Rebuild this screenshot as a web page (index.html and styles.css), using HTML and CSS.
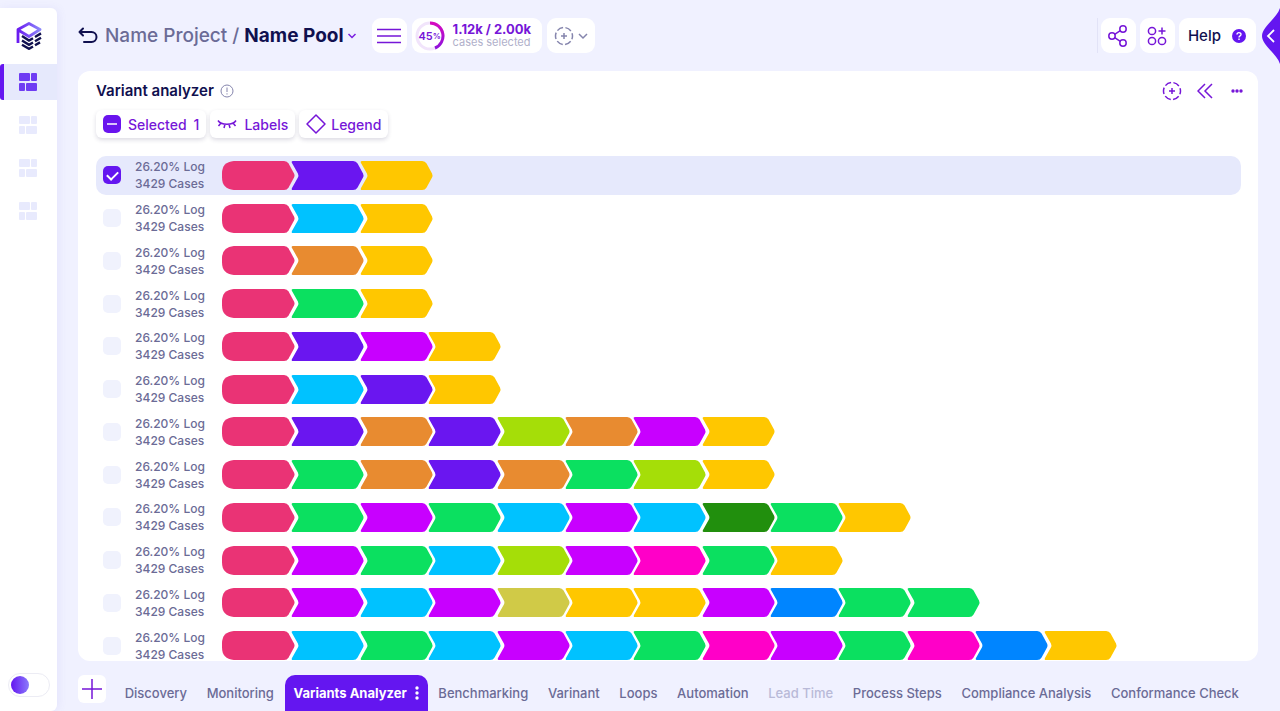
FILE: index.html
```
<!DOCTYPE html>
<html lang="en">
<head>
    <meta charset="UTF-8">
    <meta name="viewport" content="width=device-width, initial-scale=1.0">
    <title>Variant analyzer</title>
    <link rel="stylesheet" href="styles.css">
</head>
<body>
    <svg class="defs" aria-hidden="true">
        <defs>
            <linearGradient id="violet" x1="0" y1="0" x2="1" y2="0">
                <stop offset="0" stop-color="#6a1bf0"/>
                <stop offset="1" stop-color="#8b86fb"/>
            </linearGradient>
            <linearGradient id="ringColor" x1="0" y1="0" x2="0" y2="1">
                <stop offset="0" stop-color="#d60ac0"/>
                <stop offset="1" stop-color="#8f12dc"/>
            </linearGradient>
            <symbol id="dashboard" viewBox="0 0 18 18">
                <rect x="0" y="0" width="11" height="8" rx="1"/>
                <rect x="12" y="0" width="6" height="8" rx="1"/>
                <rect x="0" y="10" width="6" height="8" rx="1"/>
                <rect x="7" y="10" width="11" height="8" rx="1"/>
            </symbol>
            <symbol id="target" viewBox="0 0 20 20">
                <circle cx="10" cy="10" r="8.5" stroke-dasharray="6.5 2.4" stroke-dashoffset="3.25"/>
                <path d="M10 7v6M7 10h6"/>
            </symbol>
        </defs>
    </svg>

    <aside class="sidebar">
        <a class="logo" href="#" aria-label="Home">
            <svg width="26" height="28" viewBox="0 0 26 28" fill="none">
                <path d="M2 21V7.500L13 1.500 24 7.500 13 14.500 3 8.500" stroke="url(#violet)" stroke-width="2.800" stroke-linejoin="round"/>
                <path d="M6 14l7 4.500 4-2.300M19 15l6-3.600M6 18.500l7 4.300 4-2.300M19 19.300l6-3.600M6 22.800l7 4 4-2.300M19 23.300l5-2.900" stroke="#10104f" stroke-width="2.400"/>
            </svg>
        </a>
        <nav class="side-nav">
            <a class="side-link active" href="#" aria-label="Dashboard 1"><svg width="18" height="18"><use href="#dashboard"/></svg></a>
            <a class="side-link" href="#" aria-label="Dashboard 2"><svg width="18" height="18"><use href="#dashboard"/></svg></a>
            <a class="side-link" href="#" aria-label="Dashboard 3"><svg width="18" height="18"><use href="#dashboard"/></svg></a>
            <a class="side-link" href="#" aria-label="Dashboard 4"><svg width="18" height="18"><use href="#dashboard"/></svg></a>
        </nav>
        <input type="checkbox" class="switch" aria-label="Dark theme">
    </aside>

    <div class="page">
        <header class="topbar">
            <button class="icon-button back" aria-label="Back">
                <svg width="20" height="18" viewBox="0 0 20 18" fill="none" stroke="#10104f" stroke-width="2" stroke-linecap="round" stroke-linejoin="round"><path d="M5 1.500L1.500 5l3.500 3.500M1.500 5h12a4.500 4.500 0 0 1 0 10H6"/></svg>
            </button>
            <div class="crumbs">
                <a href="#">Name Project</a><span>/</span>
                <button class="pool">Name Pool<svg width="10" height="8" viewBox="0 0 10 8" fill="none" stroke="#7a1fe0" stroke-width="1.500"><path d="M1.500 2L5 5.500 8.500 2"/></svg></button>
            </div>
            <button class="tile" aria-label="Menu">
                <svg width="24" height="16" viewBox="0 0 24 16" stroke="#7616d8" stroke-width="1.500"><path d="M0 1.500h24M0 8h24M0 14.500h24"/></svg>
            </button>
            <div class="tile cases">
                <div class="ring">
                    <svg width="30" height="30" viewBox="0 0 30 30" fill="none" stroke-width="3">
                        <circle cx="15" cy="15" r="13" stroke="#f1e4fb"/>
                        <path d="M15 2a13 13 0 0 1 5 25" stroke="url(#ringColor)"/>
                    </svg>
                    <span class="percent">45<small>%</small></span>
                </div>
                <div class="cases-text">
                    <strong>1.12k / 2.00k</strong>
                    <span>cases selected</span>
                </div>
            </div>
            <button class="tile add-filter" aria-label="Add filter">
                <svg width="20" height="20" fill="none" stroke="#8585ad" stroke-width="1.500"><use href="#target"/></svg>
                <svg width="10" height="8" viewBox="0 0 10 8" fill="none" stroke="#8585ad" stroke-width="1.500"><path d="M1 2l4 4 4-4"/></svg>
            </button>

            <div class="actions">
                <button class="tile" aria-label="Share">
                    <svg width="20" height="22" viewBox="0 0 20 22" fill="none" stroke="#7616d8" stroke-width="1.500"><circle cx="4" cy="11" r="3.200"/><circle cx="15" cy="4" r="3.200"/><circle cx="15" cy="18" r="3.200"/><path d="M6.700 9.300l5.600-3.600M6.700 12.700l5.600 3.600"/></svg>
                </button>
                <button class="tile" aria-label="Add widget">
                    <svg width="20" height="20" viewBox="0 0 20 20" fill="none" stroke="#7616d8" stroke-width="1.500"><circle cx="5" cy="5" r="3.600"/><circle cx="5" cy="15" r="3.600"/><circle cx="15" cy="15" r="3.600"/><path d="M15 1.500v7M11.500 5h7"/></svg>
                </button>
                <button class="tile help">Help
                    <svg width="14" height="14" viewBox="0 0 14 14" fill="none" stroke="#fff" stroke-width="1.400"><circle cx="7" cy="7" r="7" fill="#6416f0" stroke="none"/><path d="M5 5.600C5 3 9 3 9 5.500 9 7 7 6.800 7 8.400M7 9.600V11"/></svg>
                </button>
            </div>
        </header>

        <main class="card">
            <div class="card-head">
                <h1>Variant analyzer</h1>
                <svg width="14" height="14" viewBox="0 0 14 14" fill="none" stroke="#8585ad"><circle cx="7" cy="7" r="6"/><path d="M7 3.500v4.500M7 9.300v1.200"/></svg>
                <div class="card-tools">
                    <button class="icon-button" aria-label="Select"><svg width="20" height="20" fill="none" stroke="#7616d8" stroke-width="1.500"><use href="#target"/></svg></button>
                    <button class="icon-button" aria-label="Collapse"><svg width="16" height="16" viewBox="0 0 16 16" fill="none" stroke="#7616d8" stroke-width="1.500"><path d="M8 1L1 8l7 7M15 1L8 8l7 7"/></svg></button>
                    <button class="icon-button" aria-label="More"><svg width="14" height="4" viewBox="0 0 14 4" fill="#7616d8"><circle cx="3" cy="2" r="1.700"/><circle cx="7" cy="2" r="1.700"/><circle cx="11" cy="2" r="1.700"/></svg></button>
                </div>
            </div>

            <div class="filters">
                <button class="filter">
                    <svg width="18" height="18" viewBox="0 0 18 18"><rect width="18" height="18" rx="5" fill="#6a14ee"/><path d="M4 9h10" stroke="#fff" stroke-width="1.500"/></svg>
                    Selected<span>1</span>
                </button>
                <button class="filter">
                    <svg width="20" height="10" viewBox="0 0 20 10" fill="none" stroke="#7616d8" stroke-width="1.500"><path d="M1 1.500c3 5 15 5 18 0M4 4L1.500 7M8 5.200L7 9M12 5.200L13 9M16 4l2.500 3"/></svg>
                    Labels
                </button>
                <button class="filter legend">
                    <svg width="20" height="20" viewBox="0 0 20 20" fill="none" stroke="#7616d8" stroke-width="1.500"><path d="M10 1l9 9-9 9-9-9z" stroke-linejoin="round"/></svg>
                    Legend
                </button>
            </div>

            <div class="variants" id="variants"></div>
        </main>

        <nav class="tabs">
            <button class="tile add-tab" aria-label="Add tab">
                <svg width="20" height="20" viewBox="0 0 20 20" stroke="#7616d8" stroke-width="1.500"><path d="M10 0v20M0 10h20"/></svg>
            </button>
            <a href="#">Discovery</a>
            <a href="#">Monitoring</a>
            <a href="#" class="current">Variants Analyzer
                <svg width="4" height="14" viewBox="0 0 4 14" fill="#fff"><circle cx="2" cy="2" r="1.700"/><circle cx="2" cy="7" r="1.700"/><circle cx="2" cy="12" r="1.700"/></svg>
            </a>
            <a href="#">Benchmarking</a>
            <a href="#">Varinant</a>
            <a href="#">Loops</a>
            <a href="#">Automation</a>
            <a href="#" class="muted">Lead Time</a>
            <a href="#">Process Steps</a>
            <a href="#">Compliance Analysis</a>
            <a href="#">Conformance Check</a>
        </nav>
    </div>

    <button class="drawer" aria-label="Open panel">
        <svg width="18" height="56" viewBox="0 0 18 56" fill="none"><path d="M18 0C15 10 0 19 0 28s15 18 18 28z" fill="#6416f0"/><path d="M12 22l-6 6 6 6" stroke="#fff" stroke-width="1.800"/></svg>
    </button>

    <script>
        const variants = [
            "rose violet yellow",
            "rose sky yellow",
            "rose orange yellow",
            "rose green yellow",
            "rose violet purple yellow",
            "rose sky violet yellow",
            "rose violet orange violet lime orange purple yellow",
            "rose green orange violet orange green lime yellow",
            "rose green purple green sky purple sky forest green yellow",
            "rose purple green sky lime purple pink green yellow",
            "rose purple sky purple olive yellow yellow purple blue green green",
            "rose sky green sky purple sky green pink purple green pink blue yellow"
        ];

        // the first step is rounded on the left, the others have a notch
        const first = "M12 0H63Q66 0 67.500 2.500L73 12Q74 14 73 16L67.500 25.500Q66 28 63 28H12Q0 27 0 16V12Q0 1 12 0Z";
        const step = "M2 0H63Q66 0 67.500 2.500L73 12Q74 14 73 16L67.500 25.500Q66 28 63 28H2Q0 28 1 26L7 16Q8 14 7 12L1 2Q0 0 2 0Z";

        document.getElementById("variants").innerHTML = variants.map((colors, row) => {
            const steps = colors.split(" ").map((color, i) =>
                `<svg class="step ${color}" width="73" height="29" viewBox="0 0 74 28" preserveAspectRatio="none"><path d="${i ? step : first}"/></svg>`
            ).join("");
            return `<label class="variant">
                <input type="checkbox" ${row === 0 ? "checked" : ""}>
                <span class="variant-text">26.20% Log<br>3429 Cases</span>
                <span class="steps">${steps}</span>
            </label>`;
        }).join("");
    </script>
</body>
</html>
```
FILE: styles.css
```
* {
    box-sizing: border-box;
}
body {
    margin: 0;
    height: 100vh;
    display: flex;
    overflow: hidden;
    background-color: #f0f1ff;
    font-family: Inter, "Open Sans", sans-serif;
    font-size: 13px;
    font-weight: 500;
    color: #6b6b96;
}
button {
    font: inherit;
    color: inherit;
    background: none;
    border: none;
    padding: 0;
    cursor: pointer;
}
a {
    color: inherit;
    text-decoration: none;
}
svg {
    display: block;
    flex-shrink: 0;
}
.defs {
    position: absolute;
    width: 0;
    height: 0;
}

/* sidebar */
.sidebar {
    width: 57px;
    flex-shrink: 0;
    margin-top: 8px;
    display: flex;
    flex-direction: column;
    align-items: center;
    background: #fff;
    border-radius: 0 6px 6px 0;
    box-shadow: 2px 0 8px rgba(100, 90, 220, 0.08);
}
.logo {
    height: 56px;
    display: flex;
    align-items: center;
}
.side-nav {
    width: 100%;
    display: flex;
    flex-direction: column;
    gap: 7px;
}
.side-link {
    height: 36px;
    display: flex;
    align-items: center;
    justify-content: center;
    fill: #e8eafd;
    border-left: 4px solid transparent;
    padding-right: 5px;
}
.side-link.active {
    background: #e6e9fc;
    border-left-color: #6416f0;
    border-radius: 3px 0 0 3px;
    fill: #6f3cf3;
}
.switch {
    appearance: none;
    width: 42px;
    height: 24px;
    margin: auto 0 14px;
    padding: 2px;
    border: 1px solid #ececf4;
    border-radius: 12px;
}
.switch::before {
    content: "";
    display: block;
    width: 18px;
    height: 18px;
    border-radius: 50%;
    background: linear-gradient(90deg, #6416f0, #8b7afb);
}

/* header */
.page {
    flex: 1;
    min-width: 0;
    display: flex;
    flex-direction: column;
    padding: 0 22px 0 21px;
}
.topbar {
    height: 71px;
    flex-shrink: 0;
    display: flex;
    align-items: center;
    gap: 5px;
}
.back {
    margin-right: 2px;
}
.crumbs {
    display: flex;
    align-items: center;
    gap: 5px;
    margin-right: 10px;
    font-size: 19px;
    white-space: nowrap;
}
.pool {
    display: flex;
    align-items: center;
    gap: 3px;
    color: #10104f;
    font-weight: 700;
}
.tile {
    min-width: 35px;
    height: 35px;
    display: flex;
    align-items: center;
    justify-content: center;
    background: #fff;
    border-radius: 9px;
}
.cases {
    padding: 0 11px 0 3px;
    gap: 8px;
}
.ring {
    position: relative;
}
.percent {
    position: absolute;
    inset: 0;
    display: flex;
    align-items: center;
    justify-content: center;
    font-size: 11px;
    font-weight: 600;
    color: #7616d8;
}
.percent small {
    font-size: 8px;
}
.cases-text {
    font-size: 11px;
    line-height: 13px;
    font-weight: 400;
    color: #b0b0ca;
}
.cases-text strong {
    display: block;
    font-size: 13px;
    color: #7616d8;
}
.add-filter {
    width: 48px;
    gap: 4px;
}
.actions {
    display: flex;
    gap: 4px;
    margin-left: auto;
    margin-right: 2px;
    padding-left: 3px;
    border-left: 1px solid #e2e3f7;
}
.help {
    padding: 0 10px 0 9px;
    gap: 11px;
    font-size: 15px;
    color: #10104f;
}
.drawer {
    position: absolute;
    top: 8px;
    right: 0;
}

/* card */
.card {
    flex: 1;
    min-height: 0;
    display: flex;
    flex-direction: column;
    padding: 0 17px 0 18px;
    background: #fff;
    border-radius: 12px;
    overflow: hidden;
}
.card-head {
    height: 39px;
    flex-shrink: 0;
    display: flex;
    align-items: center;
    gap: 6px;
}
h1 {
    margin: 0;
    font-size: 15px;
    font-weight: 600;
    color: #10104f;
}
.card-tools {
    display: flex;
    align-items: center;
    gap: 14px;
    margin-left: auto;
    margin-right: -5px;
}
.icon-button {
    min-width: 18px;
    display: flex;
    align-items: center;
    justify-content: center;
}
.filters {
    height: 46px;
    flex-shrink: 0;
    display: flex;
    align-items: flex-start;
    gap: 4px;
}
.filter {
    height: 28px;
    display: flex;
    align-items: center;
    gap: 7px;
    padding: 0 7px;
    border-radius: 6px;
    box-shadow: 0 2px 4px rgba(40, 30, 80, 0.16);
    font-size: 14px;
    color: #7616d8;
}
.filter.legend {
    gap: 5px;
}
.variants {
    flex: 1;
    display: grid;
    grid-template-columns: minmax(0, 1fr);
    grid-auto-rows: minmax(0, 1fr);
    gap: 4px;
    margin-bottom: -4px;
}
.variant {
    display: flex;
    align-items: center;
    padding-left: 7px;
    border-radius: 10px;
}
.variant:has(:checked) {
    background: #e6e9fc;
}
.variant input {
    appearance: none;
    width: 18px;
    height: 18px;
    flex-shrink: 0;
    margin: 0 14px 0 0;
    border-radius: 5px;
    background: #f0f2fd;
}
.variant input:checked {
    background: #6416f0;
}
.variant input:checked::after {
    content: "";
    display: block;
    width: 5px;
    height: 9px;
    margin: 3px auto;
    border: solid #fff;
    border-width: 0 2px 2px 0;
    transform: rotate(45deg);
}
.variant-text {
    width: 87px;
    flex-shrink: 0;
    font-size: 12px;
    line-height: 17px;
    white-space: nowrap;
}
.steps {
    flex: 1;
    display: grid;
    grid-template-columns: repeat(13, minmax(0, 1fr));
    margin-right: 130px;
}
.step + .step {
    margin-left: 1px;
}
.rose { fill: #ea3375; }
.violet { fill: #6a16f0; }
.yellow { fill: #ffc700; }
.sky { fill: #00c2ff; }
.orange { fill: #e88b30; }
.green { fill: #0be060; }
.purple { fill: #c800ff; }
.lime { fill: #a5de08; }
.forest { fill: #218f0d; }
.pink { fill: #ff00c8; }
.olive { fill: #d0ca47; }
.blue { fill: #0085ff; }

/* bottom tabs */
.tabs {
    height: 50px;
    flex-shrink: 0;
    display: flex;
    align-items: center;
    justify-content: space-between;
    padding: 14px 10px 0 0;
    white-space: nowrap;
}
.tabs a {
    padding: 0 9px;
}
.tabs .add-tab {
    min-width: 28px;
    height: 28px;
    margin-right: 8px;
    border-radius: 6px;
    align-self: flex-start;
}
.tabs .current {
    height: 36px;
    display: flex;
    align-items: center;
    gap: 8px;
    background: #6416f0;
    border-radius: 10px 10px 0 0;
    color: #fff;
    font-weight: 700;
}
.tabs .muted {
    color: #b9bad8;
}
```
